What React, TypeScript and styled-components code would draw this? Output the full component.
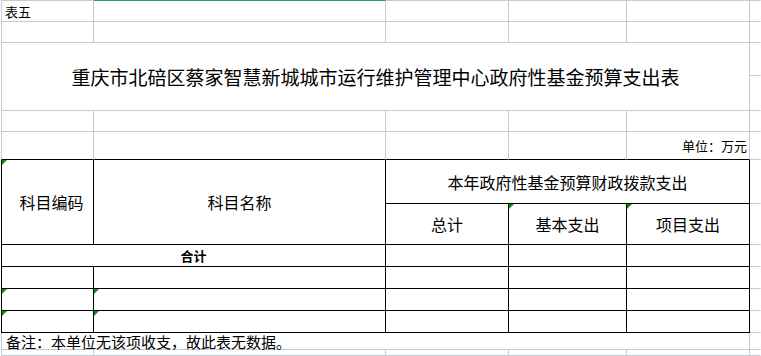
import React from "react";
import styled, { createGlobalStyle } from "styled-components";

type Line = "grid" | "ink" | "green" | "none";

const lineColor = (l: Line) =>
  l === "ink" ? "#000" : l === "green" ? "#21a366" : l === "none" ? "transparent" : "#c6cad6";

const GlobalStyle = createGlobalStyle`
  html, body {
    margin: 0;
    padding: 0;
    background: #fff;
    overflow: hidden;
  }
  body {
    font-family: "Noto Sans CJK SC", "Noto Sans", sans-serif;
    color: #000;
  }
`;

const App = () => {
  return (
    <>
      <GlobalStyle />
      <Sheet>
        {/* row 1 */}
        <Cell $left='grid' $top='grid' $align='left' $pad='0 0 0 3px'>
          <Text $size={13}>表五</Text>
        </Cell>
        <Cell $top='green' />
        <Cell $top='grid' />
        <Cell $top='grid' />
        <Cell $top='grid' />
        <Cell $top='grid' $right='none' />

        {/* row 2 */}
        <Cell $left='grid' />
        <Cell />
        <Cell />
        <Cell />
        <Cell />
        <Cell $right='none' />

        {/* title, rows 3-4 */}
        <Cell $left='grid' $span={5} $rows={2}>
          <Text $size={19}>重庆市北碚区蔡家智慧新城城市运行维护管理中心政府性基金预算支出表</Text>
        </Cell>
        <Cell $right='none' />
        <Cell $right='none' />

        {/* row 5 */}
        <Cell $left='grid' />
        <Cell />
        <Cell />
        <Cell />
        <Cell />
        <Cell $right='none' />

        {/* row 6: unit */}
        <Cell $left='grid' $bottom='ink' />
        <Cell $bottom='ink' />
        <Cell $bottom='ink' />
        <Cell $bottom='ink' />
        <Cell $bottom='ink' $align='right' $pad='0 2px 0 0'>
          <Text $size={13}>单位：万元</Text>
        </Cell>
        <Cell $right='none' />

        {/* header rows 7-8 */}
        <Cell $left='ink' $right='ink' $bottom='ink' $rows={2} $flag $pad='0 0 0 8px'>
          <Text $size={16}>科目编码</Text>
        </Cell>
        <Cell $right='ink' $bottom='ink' $rows={2}>
          <Text $size={16}>科目名称</Text>
        </Cell>
        <Cell $right='ink' $bottom='ink' $span={3}>
          <Text $size={16}>本年政府性基金预算财政拨款支出</Text>
        </Cell>
        <Cell $right='none' />
        <Cell $right='ink' $bottom='ink'>
          <Text $size={16}>总计</Text>
        </Cell>
        <Cell $right='ink' $bottom='ink' $flag>
          <Text $size={16}>基本支出</Text>
        </Cell>
        <Cell $right='ink' $bottom='ink' $flag>
          <Text $size={16}>项目支出</Text>
        </Cell>
        <Cell $right='none' />

        {/* total row */}
        <Cell $left='ink' $right='ink' $bottom='ink' $span={2}>
          <Text $size={13} $bold>合计</Text>
        </Cell>
        <Cell $right='ink' $bottom='ink' />
        <Cell $right='ink' $bottom='ink' />
        <Cell $right='ink' $bottom='ink' />
        <Cell $right='none' />

        {/* empty data rows */}
        {[false, true, true].map((flag, i) => (
          <React.Fragment key={i}>
            <Cell $left='ink' $right='ink' $bottom='ink' $flag={flag} />
            <Cell $right='ink' $bottom='ink' $flag={flag} />
            <Cell $right='ink' $bottom='ink' />
            <Cell $right='ink' $bottom='ink' />
            <Cell $right='ink' $bottom='ink' />
            <Cell $right='none' />
          </React.Fragment>
        ))}

        {/* note */}
        <Cell $left='grid' $span={5} $align='left' $pad='0 0 0 4px'>
          <Text $size={15}>备注：本单位无该项收支，故此表无数据。</Text>
        </Cell>
        <Cell $right='none' />

        {/* last visible row */}
        <Cell $left='grid' />
        <Cell />
        <Cell />
        <Cell />
        <Cell />
        <Cell $right='none' />
      </Sheet>
    </>
  );
};

export default App;

const Sheet = styled.div`
  height: 356px;
  padding-left: 1px;
  display: grid;
  grid-template-columns: 93px 292px 123px 118px 123px 1fr;
  grid-template-rows: 22px 21px 33px 35px 21px 28px 44px 41px 22px 22px 22px 22px 17px 1fr;
  overflow: hidden;
`;

const Cell = styled.div<{
  $left?: Line;
  $top?: Line;
  $right?: Line;
  $bottom?: Line;
  $span?: number;
  $rows?: number;
  $align?: "left" | "center" | "right";
  $pad?: string;
  $flag?: boolean;
}>`
  position: relative;
  box-sizing: border-box;
  min-width: 0;
  display: flex;
  align-items: center;
  justify-content: ${(p) =>
    p.$align === "left" ? "flex-start" : p.$align === "right" ? "flex-end" : "center"};
  padding: ${(p) => p.$pad ?? "0"};
  grid-column: span ${(p) => p.$span ?? 1};
  grid-row: span ${(p) => p.$rows ?? 1};
  border-right: 1px solid ${(p) => lineColor(p.$right ?? "grid")};
  border-bottom: 1px solid ${(p) => lineColor(p.$bottom ?? "grid")};
  border-left: ${(p) => (p.$left ? `1px solid ${lineColor(p.$left)}` : "none")};
  border-top: ${(p) => (p.$top ? `1px solid ${lineColor(p.$top)}` : "none")};
  white-space: nowrap;

  &::before {
    content: "";
    display: ${(p) => (p.$flag ? "block" : "none")};
    position: absolute;
    top: 0;
    left: 0;
    border-top: 5px solid #138a13;
    border-right: 5px solid transparent;
  }
`;

const Text = styled.span<{ $size: number; $bold?: boolean }>`
  font-size: ${(p) => p.$size}px;
  font-weight: ${(p) => (p.$bold ? 700 : 400)};
  line-height: 1;
  color: #000;
`;
